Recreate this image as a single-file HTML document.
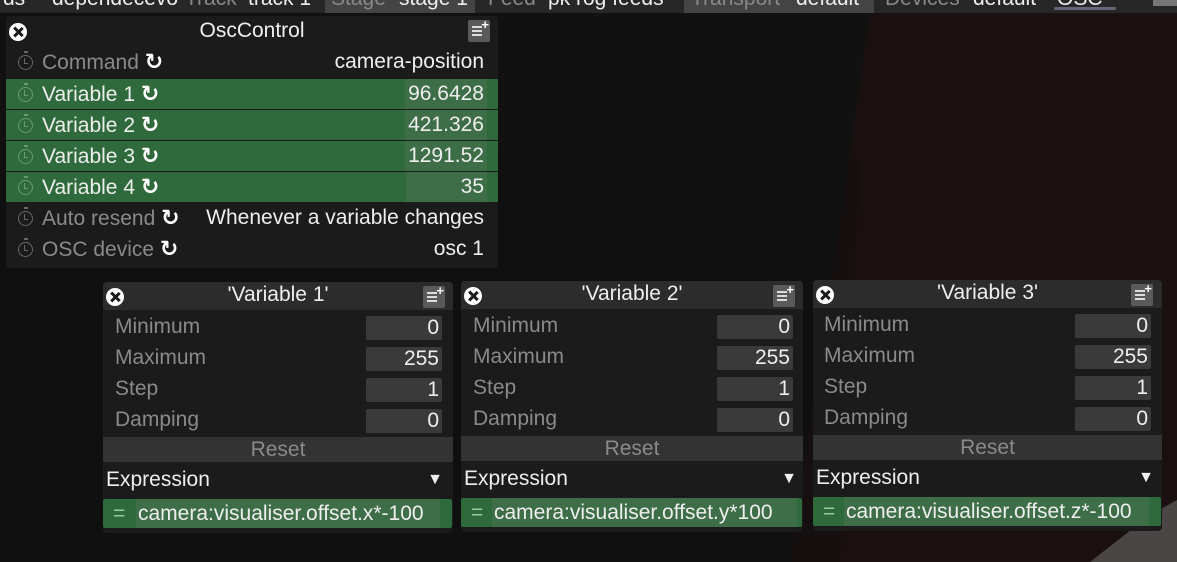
<!DOCTYPE html>
<html><head><style>
*{margin:0;padding:0;box-sizing:border-box}
body{width:1177px;height:562px;overflow:hidden;background:#111;font-family:"Liberation Sans","DejaVu Sans",sans-serif;font-size:21px;color:#eee;position:relative}
.abs{position:absolute}
.menu{left:0;top:0;width:1177px;height:13px;background:#272727;overflow:hidden}
.menu span{position:absolute;top:-13px;font-size:21px;white-space:nowrap}
.win{position:absolute;background:#1b1b1b;border-radius:4px;overflow:hidden}
.row{position:absolute;left:0;right:0;height:30px;line-height:30px}
.g{background:#2e6a3b}
.lbl{position:absolute;left:36px}
.dim{color:#8a8a8a}
.val{position:absolute;right:14px}
.vbox{position:absolute;background:#3a3a3a;text-align:right;padding-right:3px;height:24px;line-height:24px;border-radius:2px}
.close{position:absolute;width:18px;height:18px;border-radius:50%;background:#fff}
.close:before,.close:after{content:"";position:absolute;left:8px;top:3px;width:2.5px;height:12px;background:#1b1b1b;transform:rotate(45deg)}
.close:after{transform:rotate(-45deg)}
.note{position:absolute;width:22px;height:22px;background:#5a5a5a;border-radius:2px}
.note i{position:absolute;left:4px;height:2px;width:10px;background:#ddd}
.note b{position:absolute;right:1px;top:0;color:#fff;font-size:13px;line-height:10px;font-weight:bold}
.rs{color:#fff;font-weight:bold;font-size:22px}
.sw{position:absolute;left:12px;top:8px;width:15px;height:15px;border:1.5px solid #666;border-radius:50%}
.sw:before{content:"";position:absolute;left:5px;top:-5px;width:4px;height:2px;background:#666}
.sw:after{content:"";position:absolute;left:5px;top:2px;width:3px;height:5px;border-left:1.5px solid #666;border-bottom:1.5px solid #666}
.g .sw,.g .sw:after{border-color:#6a9a72}.g .sw:before{background:#6a9a72}
</style></head><body>
<svg class="abs" style="left:0;top:0" width="1177" height="562">
<polygon points="870,13 1177,13 1177,562 790,562" fill="#1a1010"/>
<polygon points="0,140 860,160 840,562 0,562" fill="#0d0d0d" opacity="0.35"/>
<polygon points="1177,500 1177,562 1090,562 1150,515" fill="#4a4646"/>
</svg>
<div class="abs menu">
<div class="abs" style="left:325px;top:0;width:150px;height:13px;background:#444"></div>
<div class="abs" style="left:684px;top:0;width:190px;height:13px;background:#444"></div>
<span style="left:3px">ds</span><span style="left:52px">dependecevo</span>
<span style="left:185px;color:#888">Track</span><span style="left:248px">track 1</span>
<span style="left:331px;color:#888">Stage</span><span style="left:399px">stage 1</span>
<span style="left:488px;color:#888">Feed</span><span style="left:548px">pk rog feeds</span>
<span style="left:691px;color:#888">Transport</span><span style="left:796px">default</span>
<span style="left:885px;color:#888">Devices</span><span style="left:973px">default</span>
<span style="left:1057px">OSC</span>
<div class="abs" style="left:1054px;top:7px;width:62px;height:3px;background:#667;border-radius:2px"></div>
<div class="abs" style="left:1153px;top:0;width:24px;height:6px;background:#777"></div>
</div>

<div class="win" style="left:6px;top:16px;width:492px;height:252px">
<div class="close" style="left:3px;top:7px"></div>
<div class="abs" style="left:0;right:0;top:3px;text-align:center">OscControl</div>
<div class="note" style="left:462px;top:4px"><i style="top:6px"></i><i style="top:10px"></i><i style="top:14px"></i><b>+</b></div>
<div class="row" style="top:31px"><div class="sw"></div><span class="lbl dim">Command <span class="rs">↻</span></span><span class="val">camera-position</span></div>
<div class="row g" style="top:63px"><div class="sw"></div><span class="lbl">Variable 1 <span class="rs">↻</span></span><span class="val" style="background:#3e6e48;padding:0 3px;right:11px">96.6428</span></div>
<div class="row g" style="top:94px"><div class="sw"></div><span class="lbl">Variable 2 <span class="rs">↻</span></span><span class="val" style="background:#3e6e48;padding:0 3px;right:11px">421.326</span></div>
<div class="row g" style="top:125px"><div class="sw"></div><span class="lbl">Variable 3 <span class="rs">↻</span></span><span class="val" style="background:#3e6e48;padding:0 3px;right:11px">1291.52</span></div>
<div class="row g" style="top:156px"><div class="sw"></div><span class="lbl">Variable 4 <span class="rs">↻</span></span><span class="val" style="background:#3e6e48;padding:0 3px 0 55px;right:11px">35</span></div>
<div class="row" style="top:187px"><div class="sw"></div><span class="lbl dim">Auto resend <span class="rs">↻</span></span><span class="val">Whenever a variable changes</span></div>
<div class="row" style="top:218px"><div class="sw"></div><span class="lbl dim">OSC device <span class="rs">↻</span></span><span class="val">osc 1</span></div>
</div>

<div class="win" style="left:103px;top:282px;width:350px;height:251px">
<div class="abs" style="left:0;right:0;top:0;height:28px;background:#2c2c2c"></div>
<div class="close" style="left:3px;top:6px"></div>
<div class="abs" style="left:0;right:0;top:1px;text-align:center">'Variable 1'</div>
<div class="note" style="left:320px;top:4px"><i style="top:6px"></i><i style="top:10px"></i><i style="top:14px"></i><b>+</b></div>
<div class="row dim" style="top:30px;left:12px">Minimum</div><div class="vbox" style="left:263px;top:34px;width:76px">0</div>
<div class="row dim" style="top:61px;left:12px">Maximum</div><div class="vbox" style="left:263px;top:65px;width:76px">255</div>
<div class="row dim" style="top:92px;left:12px">Step</div><div class="vbox" style="left:263px;top:96px;width:76px">1</div>
<div class="row dim" style="top:123px;left:12px">Damping</div><div class="vbox" style="left:263px;top:127px;width:76px">0</div>
<div class="abs dim" style="left:0;right:0;top:155px;height:25px;line-height:25px;background:#333;text-align:center">Reset</div>
<div class="row" style="top:183px;left:3px">Expression<span style="position:absolute;right:10px;font-size:16px">▼</span></div>
<div class="abs g" style="left:0;right:1px;top:217px;height:29px;line-height:29px;border-radius:2px"><span style="position:absolute;left:10px;color:#9c9">=</span><span style="position:absolute;left:33px;right:12px;background:#3e6e48;padding-left:2px">camera:visualiser.offset.x*-100</span></div>
</div>

<div class="win" style="left:461px;top:281px;width:342px;height:251px">
<div class="abs" style="left:0;right:0;top:0;height:28px;background:#2c2c2c"></div>
<div class="close" style="left:3px;top:6px"></div>
<div class="abs" style="left:0;right:0;top:1px;text-align:center">'Variable 2'</div>
<div class="note" style="left:312px;top:4px"><i style="top:6px"></i><i style="top:10px"></i><i style="top:14px"></i><b>+</b></div>
<div class="row dim" style="top:30px;left:12px">Minimum</div><div class="vbox" style="left:256px;top:34px;width:76px">0</div>
<div class="row dim" style="top:61px;left:12px">Maximum</div><div class="vbox" style="left:256px;top:65px;width:76px">255</div>
<div class="row dim" style="top:92px;left:12px">Step</div><div class="vbox" style="left:256px;top:96px;width:76px">1</div>
<div class="row dim" style="top:123px;left:12px">Damping</div><div class="vbox" style="left:256px;top:127px;width:76px">0</div>
<div class="abs dim" style="left:0;right:0;top:155px;height:25px;line-height:25px;background:#333;text-align:center">Reset</div>
<div class="row" style="top:183px;left:3px">Expression<span style="position:absolute;right:6px;font-size:16px">▼</span></div>
<div class="abs g" style="left:0;right:1px;top:217px;height:29px;line-height:29px;border-radius:2px"><span style="position:absolute;left:10px;color:#9c9">=</span><span style="position:absolute;left:31px;right:5px;background:#3e6e48;padding-left:2px">camera:visualiser.offset.y*100</span></div>
</div>

<div class="win" style="left:813px;top:280px;width:349px;height:251px">
<div class="abs" style="left:0;right:0;top:0;height:28px;background:#2c2c2c"></div>
<div class="close" style="left:3px;top:6px"></div>
<div class="abs" style="left:0;right:0;top:1px;text-align:center">'Variable 3'</div>
<div class="note" style="left:318px;top:4px"><i style="top:6px"></i><i style="top:10px"></i><i style="top:14px"></i><b>+</b></div>
<div class="row dim" style="top:30px;left:11px">Minimum</div><div class="vbox" style="left:262px;top:34px;width:76px">0</div>
<div class="row dim" style="top:61px;left:11px">Maximum</div><div class="vbox" style="left:262px;top:65px;width:76px">255</div>
<div class="row dim" style="top:92px;left:11px">Step</div><div class="vbox" style="left:262px;top:96px;width:76px">1</div>
<div class="row dim" style="top:123px;left:11px">Damping</div><div class="vbox" style="left:262px;top:127px;width:76px">0</div>
<div class="abs dim" style="left:0;right:0;top:155px;height:25px;line-height:25px;background:#333;text-align:center">Reset</div>
<div class="row" style="top:183px;left:3px">Expression<span style="position:absolute;right:8px;font-size:16px">▼</span></div>
<div class="abs g" style="left:0;right:1px;top:217px;height:29px;line-height:29px;border-radius:2px"><span style="position:absolute;left:10px;color:#9c9">=</span><span style="position:absolute;left:31px;right:12px;background:#3e6e48;padding-left:2px">camera:visualiser.offset.z*-100</span></div>
</div>
</body></html>
